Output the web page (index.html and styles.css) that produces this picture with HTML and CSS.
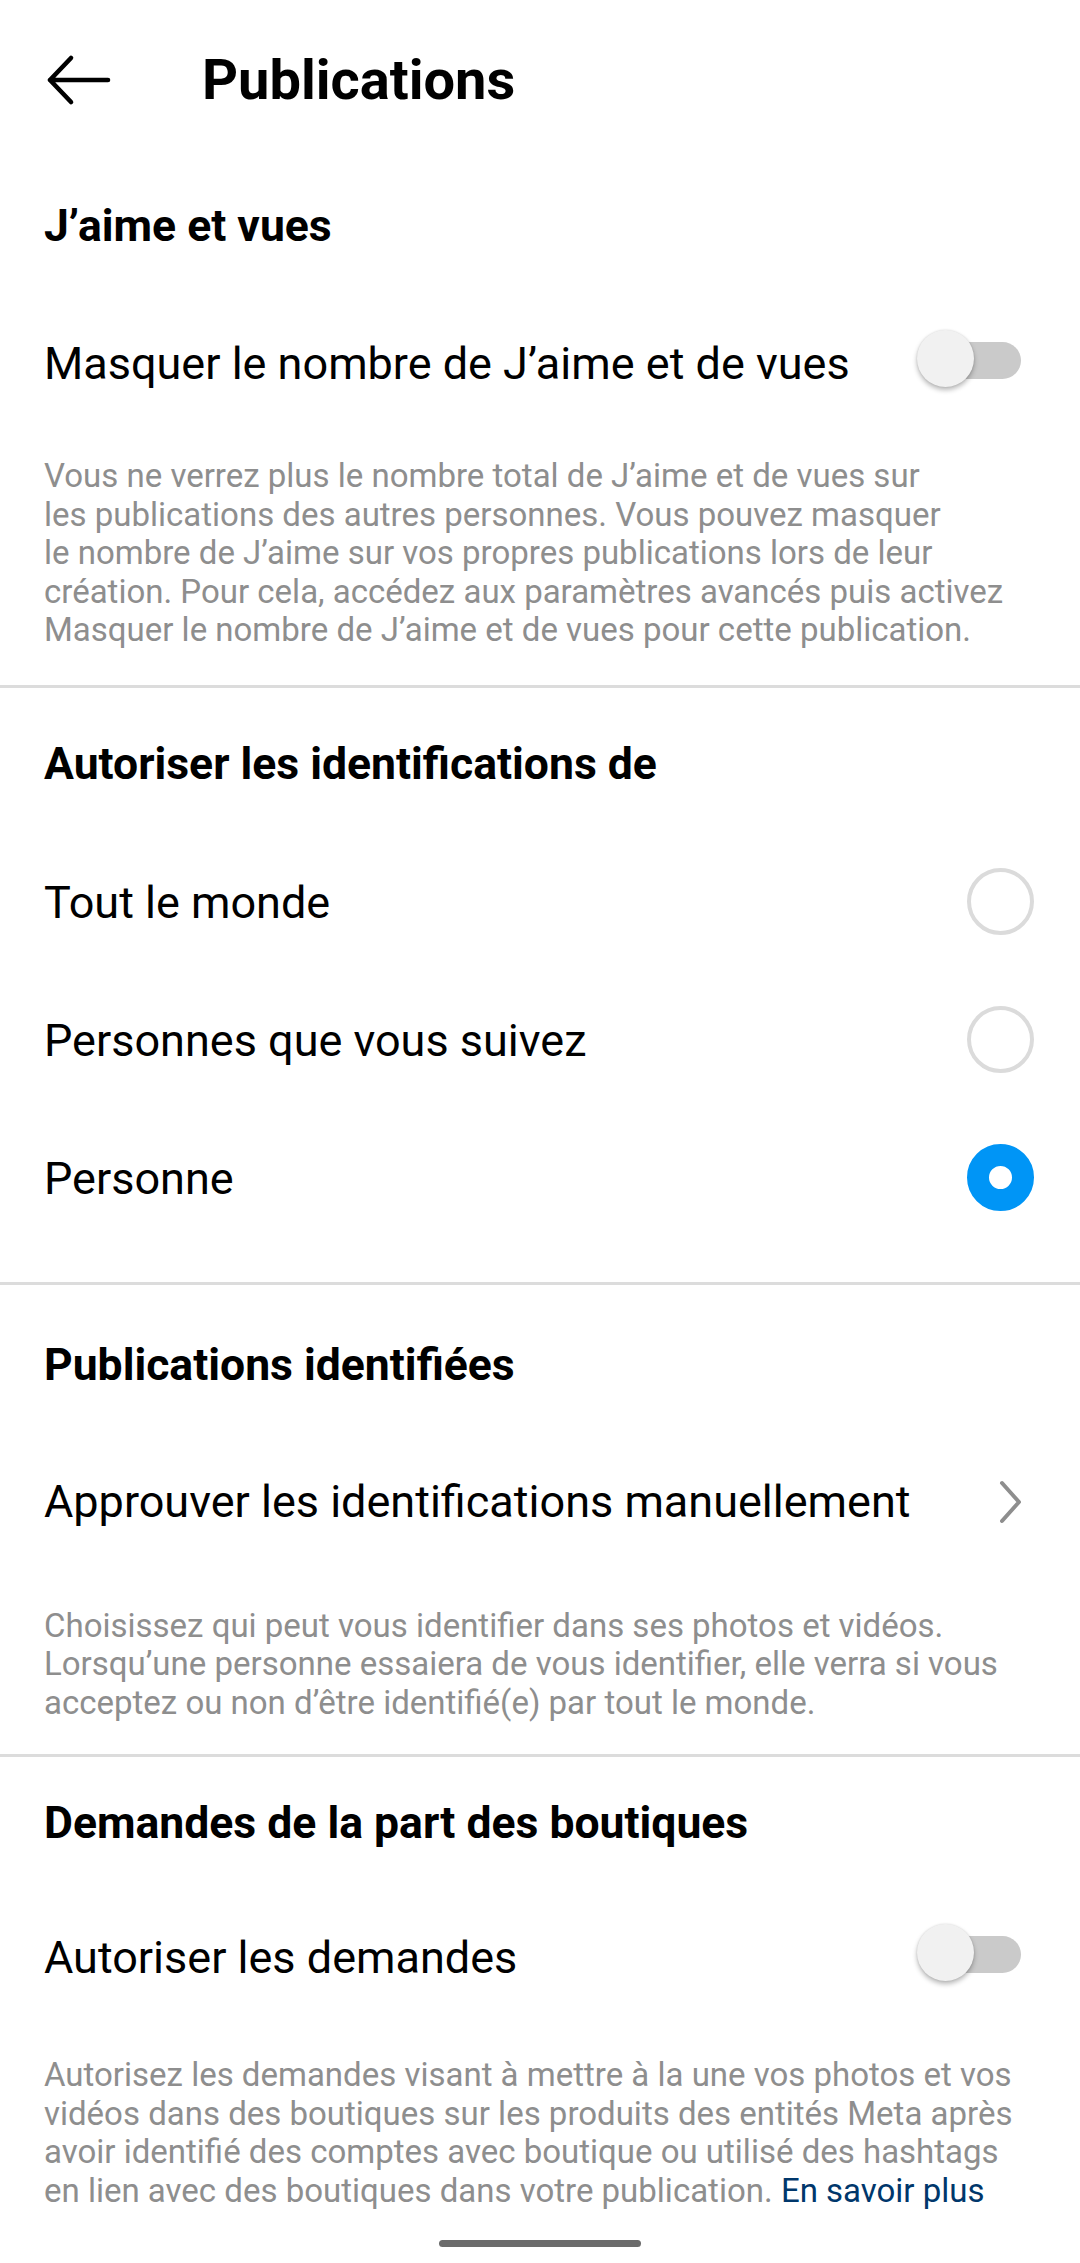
FILE: index.html
```html
<!DOCTYPE html>
<html lang="fr">
<head>
<meta charset="utf-8">
<title>Publications</title>
<link rel="stylesheet" href="styles.css">
</head>
<body>
<div class="screen">
  <header class="topbar">
    <svg class="back" width="70" height="54" viewBox="0 0 70 54" aria-hidden="true">
      <path d="M6 27 H64 M6 27 L27 5 M6 27 L27 49" fill="none" stroke="#000" stroke-width="4.6" stroke-linecap="round" stroke-linejoin="round"/>
    </svg>
    <h1 class="title">Publications</h1>
  </header>

  <section class="sec sec-1">
    <h2 class="sec-title">J’aime et vues</h2>
    <div class="row row-toggle-1">
      <span class="label">Masquer le nombre de J’aime et de vues</span>
      <span class="toggle"><span class="knob"></span></span>
    </div>
    <p class="desc desc-1">Vous ne verrez plus le nombre total de J’aime et de vues sur<br>les publications des autres personnes. Vous pouvez masquer<br>le nombre de J’aime sur vos propres publications lors de leur<br>création. Pour cela, accédez aux paramètres avancés puis activez<br>Masquer le nombre de J’aime et de vues pour cette publication.</p>
  </section>
  <div class="divider"></div>

  <section class="sec sec-2">
    <h2 class="sec-title">Autoriser les identifications de</h2>
    <div class="radios">
      <div class="row"><span class="label">Tout le monde</span><span class="radio"></span></div>
      <div class="row"><span class="label">Personnes que vous suivez</span><span class="radio"></span></div>
      <div class="row"><span class="label">Personne</span><span class="radio radio-on"></span></div>
    </div>
  </section>
  <div class="divider"></div>

  <section class="sec sec-3">
    <h2 class="sec-title">Publications identifiées</h2>
    <div class="row row-link">
      <span class="label">Approuver les identifications manuellement</span>
      <svg class="chev" width="26" height="44" viewBox="0 0 26 44" aria-hidden="true">
        <path d="M4 3 L21 22 L4 41" fill="none" stroke="#8e8e8e" stroke-width="4" stroke-linecap="round" stroke-linejoin="round"/>
      </svg>
    </div>
    <p class="desc desc-2">Choisissez qui peut vous identifier dans ses photos et vidéos.<br>Lorsqu’une personne essaiera de vous identifier, elle verra si vous<br>acceptez ou non d’être identifié(e) par tout le monde.</p>
  </section>
  <div class="divider"></div>

  <section class="sec sec-4">
    <h2 class="sec-title">Demandes de la part des boutiques</h2>
    <div class="row row-toggle-2">
      <span class="label">Autoriser les demandes</span>
      <span class="toggle"><span class="knob"></span></span>
    </div>
    <p class="desc desc-3">Autorisez les demandes visant à mettre à la une vos photos et vos<br>vidéos dans des boutiques sur les produits des entités Meta après<br>avoir identifié des comptes avec boutique ou utilisé des hashtags<br>en lien avec des boutiques dans votre publication. <a class="more" href="#">En savoir plus</a></p>
  </section>

  <div class="homebar-wrap"><span class="homebar"></span></div>
</div>
</body>
</html>
```
FILE: styles.css
```css
html, body {
  margin: 0;
  padding: 0;
  background: #ffffff;
}

body {
  font-family: Roboto, "Noto Sans", "Liberation Sans", sans-serif;
  color: #000000;
}

.screen {
  width: 1080px;
  height: 2263px;
  overflow: hidden;
  display: flex;
  flex-direction: column;
}

/* top bar */
.topbar {
  height: 160px;
  display: flex;
  align-items: center;
  flex-shrink: 0;
}

.back {
  margin-left: 44px;
  flex-shrink: 0;
}

.title {
  margin: 0 0 0 88px;
  font-size: 56px;
  line-height: 66px;
  font-weight: 700;
}

/* sections */
.sec {
  display: flex;
  flex-direction: column;
  flex-shrink: 0;
}

.sec-title {
  margin: 0;
  padding-left: 44px;
  font-size: 44.5px;
  line-height: 53px;
  font-weight: 700;
}

.sec-1 .sec-title { margin-top: 40px; }
.sec-2 .sec-title { margin-top: 50px; }
.sec-3 .sec-title { margin-top: 54px; }
.sec-4 .sec-title { margin-top: 40px; }

.row {
  height: 138px;
  display: flex;
  align-items: center;
  justify-content: space-between;
  padding: 0 46px 0 44px;
  font-size: 45px;
  line-height: 53px;
}

.row-toggle-1 { margin-top: 41px; }
.radios { margin-top: 43px; display: flex; flex-direction: column; }
.row-link { margin-top: 41px; }
.row-toggle-2 { margin-top: 38px; }

.label {
  white-space: nowrap;
}

/* description text */
.desc {
  margin: 0;
  padding-left: 44px;
  font-size: 33px;
  line-height: 38.5px;
  color: #8e8e8e;
  white-space: nowrap;
}

.desc-1 { margin-top: 25px; margin-bottom: 35px; }
.desc-2 { margin-top: 36px; margin-bottom: 32px; }
.desc-3 { margin-top: 30px; }

.more {
  color: #00376b;
  text-decoration: none;
}

.divider {
  height: 3px;
  background: #dcdcdc;
  flex-shrink: 0;
}

.sec-2 + .divider { margin-top: 34px; }

/* toggle switch */
.toggle {
  position: relative;
  width: 104px;
  height: 57px;
  margin-right: 13px;
  margin-bottom: 10px;
  flex-shrink: 0;
}

.toggle::before {
  content: "";
  position: absolute;
  left: 3px;
  right: 0;
  top: 12px;
  height: 37px;
  border-radius: 19px;
  background: #cacaca;
}

.knob {
  position: absolute;
  left: 0;
  top: 0;
  width: 57px;
  height: 57px;
  border-radius: 50%;
  background: #f1f1f1;
  box-shadow: 0 3px 5px rgba(0, 0, 0, 0.28), 0 0 2px rgba(0, 0, 0, 0.12);
}

/* radio buttons */
.radio {
  width: 67px;
  height: 67px;
  box-sizing: border-box;
  border: 4px solid #dbdbdb;
  border-radius: 50%;
  flex-shrink: 0;
  margin-bottom: 3px;
}

.radio-on {
  border: 22px solid #0095f6;
  background: #ffffff;
}

/* chevron */
.chev {
  margin-right: 10px;
  flex-shrink: 0;
}

/* home indicator */
.homebar-wrap {
  flex: 1;
  display: flex;
  justify-content: center;
  align-items: flex-end;
  padding-bottom: 16px;
}

.homebar {
  width: 202px;
  height: 7px;
  border-radius: 4px;
  background: #6b6b6b;
}
```
